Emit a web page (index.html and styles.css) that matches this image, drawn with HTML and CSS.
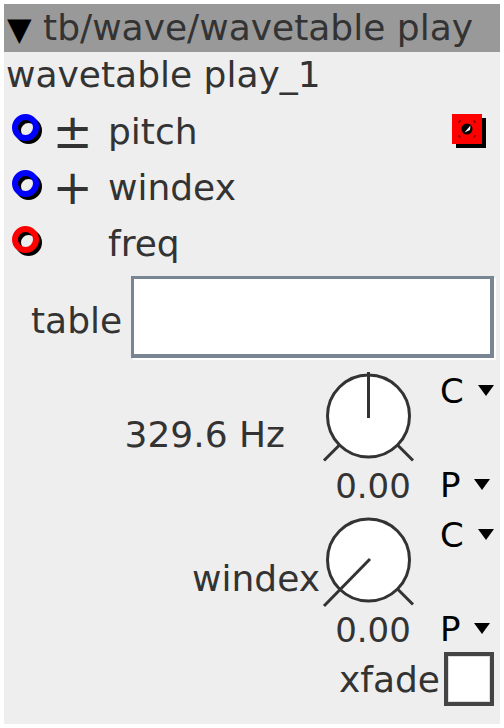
FILE: index.html
```html
<!DOCTYPE html>
<html lang="en">
<head>
    <meta charset="UTF-8">
    <meta name="viewport" content="width=device-width, initial-scale=1.0">
    <title>wavetable play</title>
    <link rel="stylesheet" href="styles.css">
</head>
<body>

<div class="node">
    <div class="title"><span class="caret">▼</span> tb/wave/wavetable play</div>
    <div class="name">wavetable play_1</div>

    <!-- inlets / outlets -->
    <div class="port">
        <svg class="ring" width="36" height="36" viewBox="0 0 36 36">
            <circle cx="17.5" cy="17.5" r="10.5" fill="none" stroke="#000" stroke-width="6"/>
            <circle cx="14.5" cy="14.5" r="10.5" fill="none" stroke="#0000ff" stroke-width="6"/>
        </svg>
        <span class="sign">±</span>
        <span class="pname">pitch</span>
        <svg class="play" width="36" height="36" viewBox="0 0 36 36">
            <rect x="5" y="5" width="30" height="30" fill="#000"/>
            <rect x="1" y="1" width="30" height="30" fill="#ff0000"/>
            <circle cx="16" cy="16" r="5.5" fill="#000"/>
            <path d="M13.5 19.5 L19.5 12.5 L19 17 Z" fill="#fff"/>
            <path d="M8 10V8h2M22 8h2v2M24 22v2h-2M10 24H8v-2" fill="none" stroke="#600" stroke-width="1"/>
        </svg>
    </div>
    <div class="port">
        <svg class="ring" width="36" height="36" viewBox="0 0 36 36">
            <circle cx="17.5" cy="17.5" r="10.5" fill="none" stroke="#000" stroke-width="6"/>
            <circle cx="14.5" cy="14.5" r="10.5" fill="none" stroke="#0000ff" stroke-width="6"/>
        </svg>
        <span class="sign">+</span>
        <span class="pname">windex</span>
    </div>
    <div class="port">
        <svg class="ring" width="36" height="36" viewBox="0 0 36 36">
            <circle cx="17.5" cy="17.5" r="10.5" fill="none" stroke="#000" stroke-width="6"/>
            <circle cx="14.5" cy="14.5" r="10.5" fill="none" stroke="#ff0000" stroke-width="6"/>
        </svg>
        <span class="sign"></span>
        <span class="pname">freq</span>
    </div>

    <div class="table-row">
        <label class="table-label">table</label>
        <div class="table-box"></div>
    </div>

    <!-- knobs -->
    <div class="knob-row">
        <div class="knob-label hz">329.6 Hz</div>
        <div class="knob">
            <svg width="100" height="102" viewBox="0 0 100 102">
                <circle cx="50.5" cy="50" r="41" fill="#fff" stroke="#333" stroke-width="3"/>
                <line x1="21.5" y1="79" x2="6" y2="94.5" stroke="#333" stroke-width="3"/>
                <line x1="79.5" y1="79" x2="95" y2="94.5" stroke="#333" stroke-width="3"/>
                <line x1="50.5" y1="6" x2="50.5" y2="52" stroke="#333" stroke-width="3"/>
            </svg>
            <div class="knob-value">0.00</div>
        </div>
        <div class="opts">
            <div class="opt">C <span class="tri"></span></div>
            <div class="opt">P <span class="tri"></span></div>
        </div>
    </div>

    <div class="knob-row">
        <div class="knob-label">windex</div>
        <div class="knob">
            <svg width="100" height="102" viewBox="0 0 100 102">
                <circle cx="50.5" cy="50" r="41" fill="#fff" stroke="#333" stroke-width="3"/>
                <line x1="79.5" y1="79" x2="95" y2="94.5" stroke="#333" stroke-width="3"/>
                <line x1="52" y1="49" x2="6" y2="96" stroke="#333" stroke-width="3"/>
            </svg>
            <div class="knob-value">0.00</div>
        </div>
        <div class="opts">
            <div class="opt">C <span class="tri"></span></div>
            <div class="opt">P <span class="tri"></span></div>
        </div>
    </div>

    <div class="toggle-row">
        <span class="toggle-label">xfade</span>
        <div class="check"></div>
    </div>
</div>

</body>
</html>
```

FILE: styles.css
```css
body {
    margin: 0;
    padding: 4px;
    background-color: #fff;
    font-family: 'DejaVu Sans', sans-serif;
    color: #333;
}

.node {
    width: 496px;
    height: 720px;
    background-color: #eeeeee;
}

.title {
    height: 48px;
    line-height: 48px;
    font-size: 36px;
    background-color: #999999;
    padding-left: 3px;
    white-space: nowrap;
}

.caret {
    color: #000;
    font-size: 32px;
}

.name {
    height: 52px;
    line-height: 46px;
    font-size: 36px;
    padding-left: 2px;
}

.port {
    display: flex;
    align-items: center;
    height: 54px;
    padding: 0 0 2px 7px;
    font-size: 36px;
}

.ring {
    flex: none;
}

.sign {
    width: 51px;
    text-align: center;
    font-size: 48px;
}

.pname {
    margin-left: 10px;
}

.play {
    margin-left: auto;
    margin-right: 13px;
}

.table-row {
    display: flex;
    align-items: center;
    padding: 4px 6px 4px 27px;
    font-size: 36px;
}

.table-label {
    padding-top: 6px;
    margin-right: 9px;
}

.table-box {
    flex: 1;
    height: 75px;
    background-color: #fff;
    border-style: solid;
    border-color: #788592;
    border-width: 3px 4px 4px 3px;
    box-shadow: 2px 2px 0 #fff;
}

.knob-row {
    display: flex;
    justify-content: flex-end;
    align-items: flex-start;
    height: 138px;
    margin-top: 6px;
    padding-right: 5px;
}

.table-row + .knob-row {
    margin-top: 4px;
}

.knob-label {
    font-size: 36px;
    line-height: 40px;
    padding-top: 49px;
    margin-right: -2px;
}

.knob-label.hz {
    margin-right: 33px;
}

.knob {
    width: 100px;
    display: flex;
    flex-direction: column;
    align-items: center;
}

.knob svg {
    display: block;
}

.knob-value {
    font-size: 34px;
    line-height: 36px;
    padding-left: 10px;
    white-space: nowrap;
}

.opts {
    width: 55px;
    height: 130px;
    margin-left: 22px;
    padding-top: 7px;
    display: flex;
    flex-direction: column;
    justify-content: space-between;
}

.opt {
    font-size: 34px;
    line-height: 36px;
    color: #000;
    white-space: nowrap;
}

.tri {
    display: inline-block;
    width: 0;
    height: 0;
    margin-left: 3px;
    vertical-align: 7px;
    border-left: 8px solid transparent;
    border-right: 8px solid transparent;
    border-top: 11px solid #000;
}

.toggle-row {
    display: flex;
    justify-content: flex-end;
    align-items: center;
    padding: 4px 6px 0 0;
    font-size: 36px;
}

.toggle-label {
    margin-right: 4px;
}

.check {
    width: 42px;
    height: 46px;
    background-color: #fff;
    border: 4px solid #444;
    box-shadow: inset 0 0 0 1px #ddd;
}
```
